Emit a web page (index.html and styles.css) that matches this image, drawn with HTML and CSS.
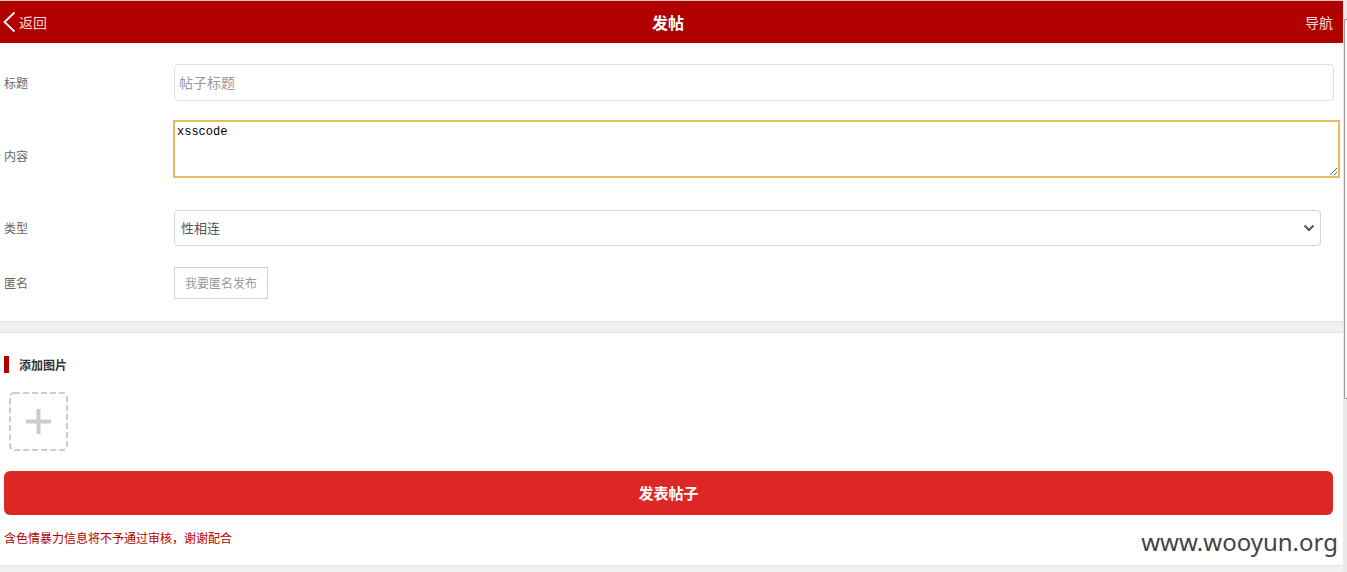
FILE: index.html
```html
<!DOCTYPE html>
<html lang="zh-CN">
<head>
<meta charset="utf-8">
<title>发帖</title>
<link rel="stylesheet" href="styles.css">
</head>
<body>
<div class="page">
  <header class="topbar">
    <a class="topbar-link back" href="#"><svg class="back-icon" width="13" height="22" viewBox="0 0 13 22" aria-hidden="true"><path d="M11.500 1.500L1.500 11L11.500 20.500" fill="none" stroke="currentColor" stroke-width="1.800"/></svg>返回</a>
    <h1 class="topbar-title">发帖</h1>
    <a class="topbar-link nav" href="#">导航</a>
  </header>
  <form class="post-form">
    <section class="fields">
      <label class="label" for="title">标题</label>
      <input class="title-input" id="title" type="text" placeholder="帖子标题">
      <label class="label" for="content">内容</label>
      <div class="content-wrap">
        <textarea class="content-input" id="content">xsscode</textarea>
      </div>
      <label class="label" for="type">类型</label>
      <div class="select-wrap">
        <select class="type-select" id="type"><option>性相连</option></select>
        <svg class="chevron" width="12" height="8" viewBox="0 0 12 8" aria-hidden="true"><path d="M1.500 1.500L6 6L10.500 1.500" fill="none" stroke="#555" stroke-width="2"/></svg>
      </div>
      <label class="label" for="anonymous">匿名</label>
      <button class="anonymous" id="anonymous" type="button">我要匿名发布</button>
    </section>
    <div class="divider"></div>
    <section class="publish">
      <h2 class="section-title">添加图片</h2>
      <button class="add-image" type="button" aria-label="添加图片"><svg width="59" height="59" viewBox="0 0 59 59" aria-hidden="true"><rect x="1" y="1" width="57" height="57" rx="4" fill="none" stroke="#ccc" stroke-width="2" stroke-dasharray="6 3"/><path d="M17 29.500H42M29.500 17V42" fill="none" stroke="#ccc" stroke-width="4"/></svg></button>
      <button class="submit" type="submit">发表帖子</button>
      <p class="notice">含色情暴力信息将不予通过审核，谢谢配合</p>
    </section>
  </form>
  <footer class="page-end"></footer>
</div>
<div class="scrollbar"><div class="thumb"></div></div>
<div class="watermark">www.wooyun.org</div>
</body>
</html>
```
FILE: styles.css
```css
* { box-sizing: border-box; }
body {
  display: flex;
  position: relative;
  min-height: 100vh;
  margin: 0;
  background: #fff;
  color: #666;
  font: 12px/18px "Noto Sans CJK SC", sans-serif;
}
button, input, select { font-family: inherit; }
.page {
  display: flex;
  flex: 1;
  flex-direction: column;
  border-top: 1px solid #e8c4b8;
}
.topbar {
  display: grid;
  grid-template-columns: 1fr auto 1fr;
  align-items: center;
  height: 42px;
  padding: 0 10px 0 3px;
  background: #b00000;
  color: #fff;
}
.topbar-link {
  color: #f6dcdc;
  font-size: 14px;
  text-decoration: none;
}
.back {
  display: flex;
  align-items: center;
  gap: 3px;
}
.back-icon { color: #fff; }
.topbar-title {
  margin: 0;
  font-size: 16px;
  line-height: 24px;
}
.nav { justify-self: end; }
.fields {
  display: grid;
  grid-template-columns: 170px 1fr;
  align-items: center;
  row-gap: 20px;
  padding: 21px 4px 22px;
}
.title-input {
  width: calc(100% - 5px);
  height: 37px;
  padding: 0 4px 2px;
  border: 1px solid #ddd;
  border-radius: 4px;
  font-size: 14px;
}
.title-input::placeholder { color: #999; }
.content-wrap { padding-bottom: 13px; }
.content-input {
  display: block;
  width: 100%;
  height: 56px;
  margin: 0;
  padding: 2px;
  border: 1px solid #e9b860;
  outline: 1px solid #e9b860;
  color: #000;
  font: 12px/16px "Liberation Mono", monospace;
  resize: vertical;
}
.select-wrap {
  position: relative;
  margin-right: 18px;
}
.type-select {
  display: block;
  width: 100%;
  height: 36px;
  padding: 0 6px 2px;
  border: 1px solid #d4d4d4;
  border-radius: 4px;
  background: #fff;
  color: #555;
  font-size: 13px;
  appearance: none;
}
.chevron {
  position: absolute;
  top: 14px;
  right: 6px;
  pointer-events: none;
}
.anonymous {
  justify-self: start;
  height: 32px;
  margin-top: 1px;
  padding: 0 10px 2px;
  border: 1px solid #d4d4d4;
  background: #fff;
  color: #999;
  font-size: 12px;
}
.divider {
  height: 12px;
  border: 1px solid #e4e4e4;
  border-width: 1px 0;
  background: #f0f0f0;
}
.publish { padding: 23px 10px 18px 4px; }
.section-title {
  margin: 0 0 19px;
  padding-left: 10px;
  border-left: 5px solid #b00000;
  color: #333;
  font-size: 12px;
  line-height: 17px;
}
.add-image {
  display: block;
  width: 59px;
  height: 59px;
  margin: 0 0 20px 5px;
  padding: 0;
  border: 0;
  background: none;
}
.add-image svg { display: block; }
.submit {
  display: block;
  width: 100%;
  height: 44px;
  padding: 0 0 2px;
  border: 0;
  border-radius: 6px;
  background: #dd2727;
  color: #fff;
  font-size: 15px;
  font-weight: bold;
}
.notice {
  margin: 14px 0 0;
  color: #b00000;
  font-family: "Noto Sans CJK TC", sans-serif;
}
.page-end {
  flex: 1;
  border-top: 1px solid #e0e0e0;
  background: #f0f0f0;
}
.scrollbar {
  width: 4px;
  padding: 19px 0 0 1px;
  background: #e8e8e8;
}
.thumb {
  height: 380px;
  border: 1px solid #999;
  border-right: 0;
  border-radius: 2px 0 0 2px;
  background: #f5f5f5;
}
.watermark {
  position: absolute;
  right: 9px;
  bottom: 13px;
  color: #444;
  font: 24px/34px "Noto Sans", sans-serif;
}
```
